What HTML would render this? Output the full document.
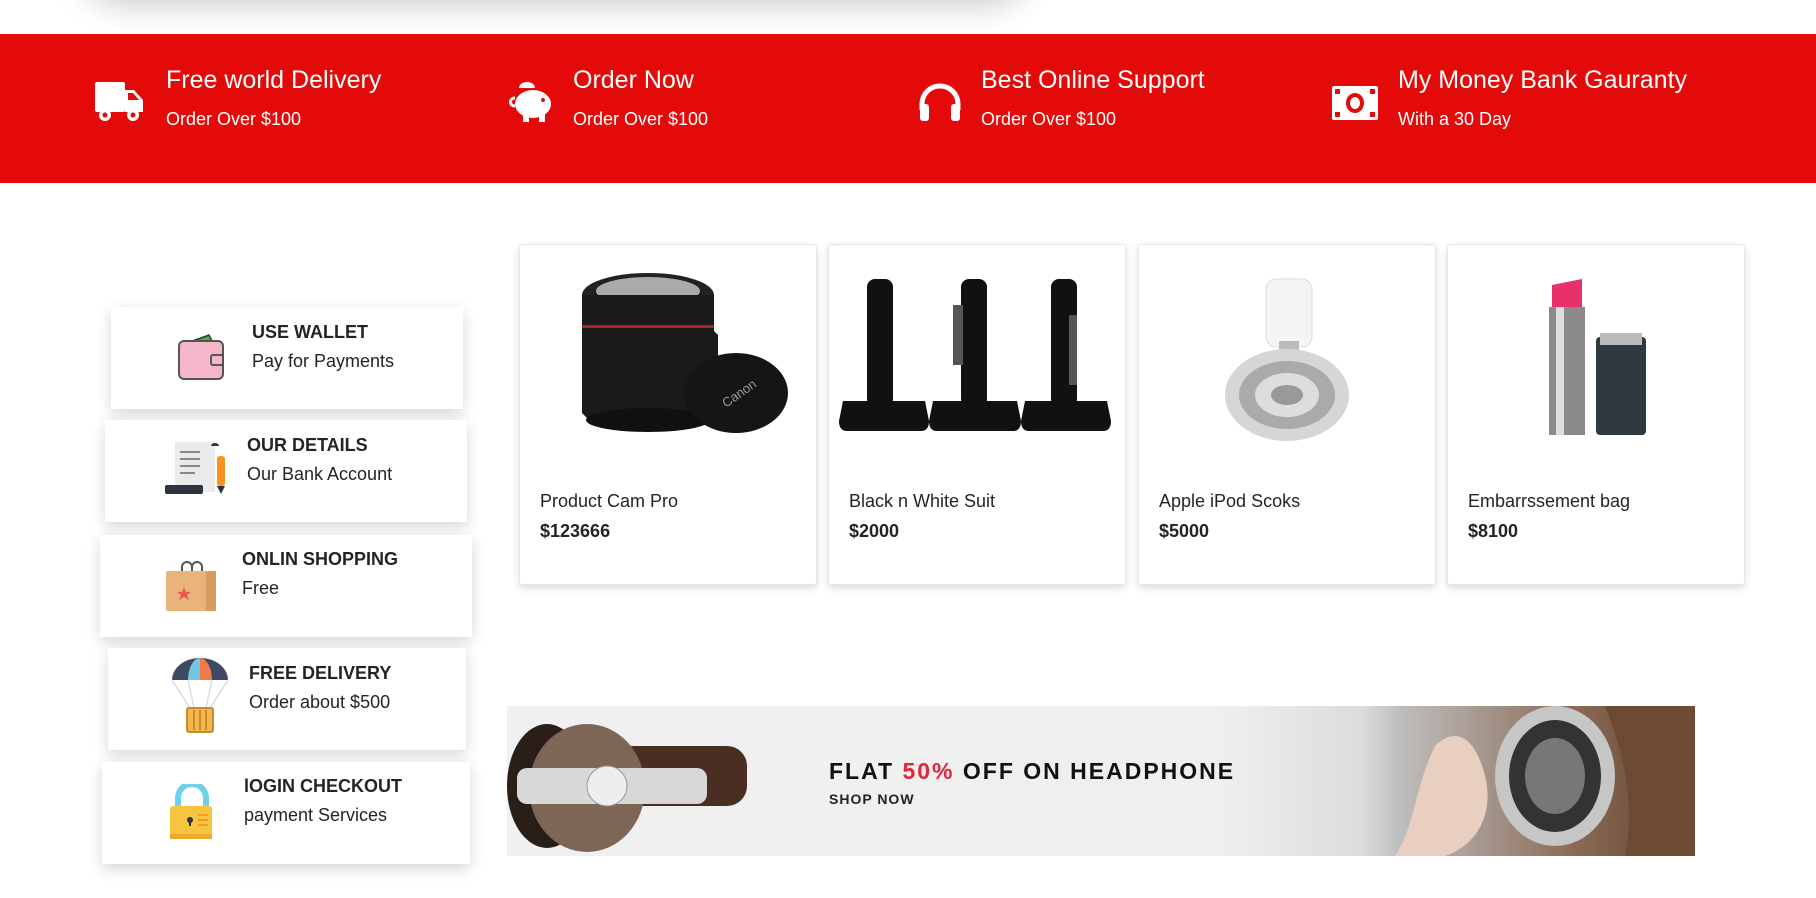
<!DOCTYPE html>
<html><head><meta charset="utf-8"><style>
*{margin:0;padding:0;box-sizing:border-box}
body{width:1816px;height:898px;overflow:hidden;background:#fff;font-family:"Liberation Sans",sans-serif;position:relative;color:#212529}
.abs{position:absolute}
.topsh{left:70px;top:-80px;width:970px;height:80px;background:#fff;box-shadow:0 8px 30px rgba(0,0,0,.18);border-radius:0 0 60px 60px}
.red{left:0;top:34px;width:1816px;height:149px;background:#e40a0a}
.ft .t{position:absolute;color:#fff;font-size:25px;top:32px;white-space:nowrap}
.ft .s{position:absolute;color:#fff;font-size:18px;top:75px;white-space:nowrap}
.card{background:#fff;box-shadow:0 5px 14px rgba(0,0,0,.16)}
.card .h{position:absolute;font-weight:bold;font-size:18px;white-space:nowrap}
.card .p{position:absolute;font-size:18px;white-space:nowrap}
.prod{top:244px;width:298px;height:341px;background:#fff;border:1px solid #e6e6e6;border-radius:3px;box-shadow:0 3px 8px rgba(0,0,0,.15)}
.prod .n{position:absolute;left:20px;top:246px;font-size:18px}
.prod .pr{position:absolute;left:20px;top:276px;font-size:18px;font-weight:bold}
.prod svg{position:absolute;left:0;top:0}
</style></head><body>
<div class="abs topsh"></div>
<div class="abs red">
 <div class="ft">
  <svg class="abs" style="left:95px;top:48px" width="50" height="40" viewBox="0 0 50 40"><rect x="0" y="0" width="30" height="30" rx="2" fill="#fff"/><path d="M30 8h9l9 10v12H30z" fill="#fff"/><path d="M33 11h5l6 7H33z" fill="#e40a0a"/><circle cx="10" cy="33" r="6" fill="#fff"/><circle cx="10" cy="33" r="2.5" fill="#e40a0a"/><circle cx="38" cy="33" r="6" fill="#fff"/><circle cx="38" cy="33" r="2.5" fill="#e40a0a"/></svg>
  <div class="t" style="left:166px">Free world Delivery</div><div class="s" style="left:166px">Order Over $100</div>
  <svg class="abs" style="left:507px;top:46px" width="48" height="44" viewBox="0 0 48 44"><path d="M20 2a8 6 0 0 1 8 6H12a8 6 0 0 1 8-6z" fill="#fff"/><ellipse cx="26" cy="24" rx="18" ry="14" fill="#fff"/><rect x="16" y="32" width="6" height="10" fill="#fff"/><rect x="32" y="32" width="6" height="10" fill="#fff"/><path d="M8 18c-6 0-6 8 0 8" stroke="#fff" stroke-width="3" fill="none"/><circle cx="36" cy="20" r="2" fill="#e40a0a"/></svg>
  <div class="t" style="left:573px">Order Now</div><div class="s" style="left:573px">Order Over $100</div>
  <svg class="abs" style="left:918px;top:48px" width="44" height="40" viewBox="0 0 44 40"><path d="M4 28V22a18 18 0 0 1 36 0v6" stroke="#fff" stroke-width="5" fill="none"/><rect x="2" y="22" width="9" height="17" rx="3" fill="#fff"/><rect x="33" y="22" width="9" height="17" rx="3" fill="#fff"/></svg>
  <div class="t" style="left:981px">Best Online Support</div><div class="s" style="left:981px">Order Over $100</div>
  <svg class="abs" style="left:1332px;top:52px" width="46" height="34" viewBox="0 0 46 34"><rect width="46" height="34" rx="2" fill="#fff"/><ellipse cx="23" cy="17" rx="9" ry="10" fill="#e40a0a"/><ellipse cx="23" cy="17" rx="5" ry="6" fill="#fff"/><rect x="3" y="3" width="5" height="5" fill="#e40a0a"/><rect x="38" y="3" width="5" height="5" fill="#e40a0a"/><rect x="3" y="26" width="5" height="5" fill="#e40a0a"/><rect x="38" y="26" width="5" height="5" fill="#e40a0a"/></svg>
  <div class="t" style="left:1398px">My Money Bank Gauranty</div><div class="s" style="left:1398px">With a 30 Day</div>
 </div>
</div>

<div class="abs card" style="left:111px;top:307px;width:352px;height:102px">
 <svg class="abs" style="left:66px;top:26px" width="50" height="48" viewBox="0 0 50 48"><path d="M10 10l22-8 6 12z" fill="#3cb54a" stroke="#333" stroke-width="1.5"/><rect x="2" y="8" width="44" height="38" rx="5" fill="#f4b6c8" stroke="#555" stroke-width="2"/><rect x="34" y="22" width="12" height="10" rx="2" fill="#f4b6c8" stroke="#555" stroke-width="2"/></svg>
 <div class="h" style="left:141px;top:15px">USE WALLET</div><div class="p" style="left:141px;top:44px">Pay for Payments</div>
</div>
<div class="abs card" style="left:105px;top:420px;width:362px;height:102px">
 <svg class="abs" style="left:60px;top:20px" width="66" height="58" viewBox="0 0 66 58"><rect x="10" y="2" width="40" height="50" fill="#eaeaea"/><g stroke="#888" stroke-width="2"><line x1="15" y1="12" x2="35" y2="12"/><line x1="15" y1="19" x2="35" y2="19"/><line x1="15" y1="26" x2="35" y2="26"/><line x1="15" y1="33" x2="30" y2="33"/></g><rect x="0" y="45" width="38" height="9" rx="2" fill="#2c3440"/><path d="M46 6a4 3 0 0 1 8 0z" fill="#2c3440"/><rect x="52" y="16" width="8" height="30" rx="3" fill="#f7931e"/><path d="M52 46h8l-4 8z" fill="#2c3440"/></svg>
 <div class="h" style="left:142px;top:15px">OUR DETAILS</div><div class="p" style="left:142px;top:44px">Our Bank Account</div>
</div>
<div class="abs card" style="left:100px;top:535px;width:372px;height:102px">
 <svg class="abs" style="left:66px;top:24px" width="52" height="52" viewBox="0 0 52 52"><path d="M16 12v-4a5 5 0 0 1 10 0v4M26 12v-4a5 5 0 0 1 10 0v4" stroke="#555" stroke-width="2" fill="none"/><rect x="0" y="12" width="50" height="40" rx="2" fill="#e8b47c"/><rect x="40" y="12" width="10" height="40" fill="#d99b5e"/><path d="M18 28l2 5h5l-4 3 2 5-5-3-5 3 2-5-4-3h5z" fill="#ea5a4e"/></svg>
 <div class="h" style="left:142px;top:14px">ONLIN SHOPPING</div><div class="p" style="left:142px;top:43px">Free</div>
</div>
<div class="abs card" style="left:108px;top:648px;width:358px;height:102px">
 <svg class="abs" style="left:62px;top:10px" width="60" height="76" viewBox="0 0 60 76"><path d="M2 22a28 22 0 0 1 56 0z" fill="#3e4a63"/><path d="M18 22a12 22 0 0 1 12-22 12 22 0 0 1 0 22z" fill="#6fc7e0"/><path d="M30 0a12 22 0 0 1 12 22H30z" fill="#ee7a4c"/><g stroke="#ddd" stroke-width="1.5"><line x1="2" y1="22" x2="20" y2="50"/><line x1="18" y1="22" x2="24" y2="50"/><line x1="42" y1="22" x2="36" y2="50"/><line x1="58" y1="22" x2="40" y2="50"/></g><rect x="17" y="50" width="26" height="24" rx="2" fill="#f1b64c" stroke="#c98a2c" stroke-width="2"/><g stroke="#c98a2c" stroke-width="2"><line x1="24" y1="52" x2="24" y2="72"/><line x1="30" y1="52" x2="30" y2="72"/><line x1="36" y1="52" x2="36" y2="72"/></g></svg>
 <div class="h" style="left:141px;top:15px">FREE DELIVERY</div><div class="p" style="left:141px;top:44px">Order about $500</div>
</div>
<div class="abs card" style="left:102px;top:762px;width:368px;height:102px">
 <svg class="abs" style="left:68px;top:22px" width="44" height="56" viewBox="0 0 44 56"><path d="M8 24V14a14 14 0 0 1 28 0v10" stroke="#6fd0ea" stroke-width="6" fill="none"/><rect x="0" y="22" width="42" height="33" rx="3" fill="#f7c440"/><rect x="0" y="50" width="42" height="5" fill="#f0a830"/><circle cx="20" cy="36" r="3" fill="#333"/><rect x="19" y="36" width="2" height="6" fill="#333"/><g stroke="#f09a20" stroke-width="2"><line x1="28" y1="31" x2="38" y2="31"/><line x1="28" y1="36" x2="38" y2="36"/><line x1="28" y1="41" x2="38" y2="41"/></g></svg>
 <div class="h" style="left:142px;top:14px">lOGIN CHECKOUT</div><div class="p" style="left:142px;top:43px">payment Services</div>
</div>

<div class="abs prod" style="left:519px">
 <svg width="298" height="200" viewBox="0 0 298 200"><ellipse cx="128" cy="50" rx="66" ry="22" fill="#222"/><ellipse cx="128" cy="46" rx="52" ry="14" fill="#aaa"/><path d="M62 50h132v36l4 4v80l-10 6H70l-8-8z" fill="#1a1a1a"/><rect x="62" y="80" width="132" height="3" fill="#b02020"/><ellipse cx="128" cy="175" rx="62" ry="12" fill="#111"/><ellipse cx="216" cy="148" rx="52" ry="40" fill="#151515"/><text x="200" y="156" fill="#999" font-size="13" transform="rotate(-35 214 150)">Canon</text></svg>
 <div class="n">Product Cam Pro</div><div class="pr">$123666</div></div>
<div class="abs prod" style="left:828px">
 <svg width="298" height="200" viewBox="0 0 298 200"><g fill="#111"><rect x="38" y="34" width="26" height="128" rx="8"/><path d="M14 156h82l4 20c0 8-4 10-8 10H18c-4 0-8-2-8-10z"/><rect x="132" y="34" width="26" height="128" rx="8"/><path d="M104 156h84l4 20c0 8-4 10-8 10H108c-4 0-8-2-8-10z"/><rect x="222" y="34" width="26" height="128" rx="8"/><path d="M196 156h82l4 20c0 8-4 10-8 10H200c-4 0-8-2-8-10z"/></g><g fill="#555"><rect x="124" y="60" width="10" height="60"/><rect x="240" y="70" width="8" height="70"/></g></svg>
 <div class="n">Black n White Suit</div><div class="pr">$2000</div></div>
<div class="abs prod" style="left:1138px">
 <svg width="298" height="200" viewBox="0 0 298 200"><rect x="127" y="34" width="46" height="68" rx="10" fill="#f4f4f4" stroke="#ddd"/><rect x="140" y="96" width="20" height="30" fill="#bbb"/><ellipse cx="148" cy="150" rx="62" ry="46" fill="#d6d6d6"/><ellipse cx="148" cy="150" rx="48" ry="34" fill="#aaa"/><ellipse cx="148" cy="150" rx="32" ry="22" fill="#ddd"/><ellipse cx="148" cy="150" rx="16" ry="10" fill="#999"/></svg>
 <div class="n">Apple iPod Scoks</div><div class="pr">$5000</div></div>
<div class="abs prod" style="left:1447px">
 <svg width="298" height="200" viewBox="0 0 298 200"><path d="M104 40l30 -6v30h-30z" fill="#e8306a"/><rect x="101" y="62" width="36" height="128" fill="#8a8a8a"/><rect x="108" y="62" width="8" height="128" fill="#ddd"/><rect x="148" y="92" width="50" height="98" rx="4" fill="#2f3a40"/><rect x="152" y="88" width="42" height="12" fill="#bbb"/></svg>
 <div class="n">Embarrssement bag</div><div class="pr">$8100</div></div>

<div class="abs" style="left:507px;top:706px;width:1188px;height:150px;background:linear-gradient(90deg,#f0f0f0 0%,#efefef 60%,#dcdcdc 72%,#bfbfbf 75%,#8a6a55 90%,#5a4030 100%);overflow:hidden">
 <svg class="abs" style="left:0;top:0" width="240" height="150" viewBox="0 0 240 150"><rect x="100" y="40" width="140" height="60" rx="20" fill="#4a2e22"/><ellipse cx="40" cy="80" rx="40" ry="62" fill="#2a1e18"/><ellipse cx="80" cy="82" rx="58" ry="64" fill="#7d6656"/><rect x="10" y="62" width="190" height="36" rx="10" fill="#d8d8d8"/><circle cx="100" cy="80" r="20" fill="#eee" stroke="#999"/></svg>
 <svg class="abs" style="left:868px;top:0" width="320" height="150" viewBox="0 0 320 150"><path d="M60 40c20-20 40-10 50 30s-10 70-40 80H20c20-30 20-70 40-110z" fill="#e9cfc0"/><ellipse cx="180" cy="70" rx="60" ry="70" fill="#c6c6c6"/><ellipse cx="180" cy="70" rx="46" ry="56" fill="#333"/><ellipse cx="180" cy="70" rx="30" ry="38" fill="#777"/><path d="M230 0h90v150h-70c10-50 0-100-20-150z" fill="#6e4a33"/></svg>
 <div class="abs" style="left:322px;top:52px;font-size:23px;font-weight:bold;letter-spacing:2px;color:#111;white-space:nowrap">FLAT <span style="color:#e4233c">50%</span> OFF ON HEADPHONE</div>
 <div class="abs" style="left:322px;top:85px;font-size:14px;font-weight:bold;letter-spacing:1px;color:#222">SHOP NOW</div>
</div>
</body></html>
